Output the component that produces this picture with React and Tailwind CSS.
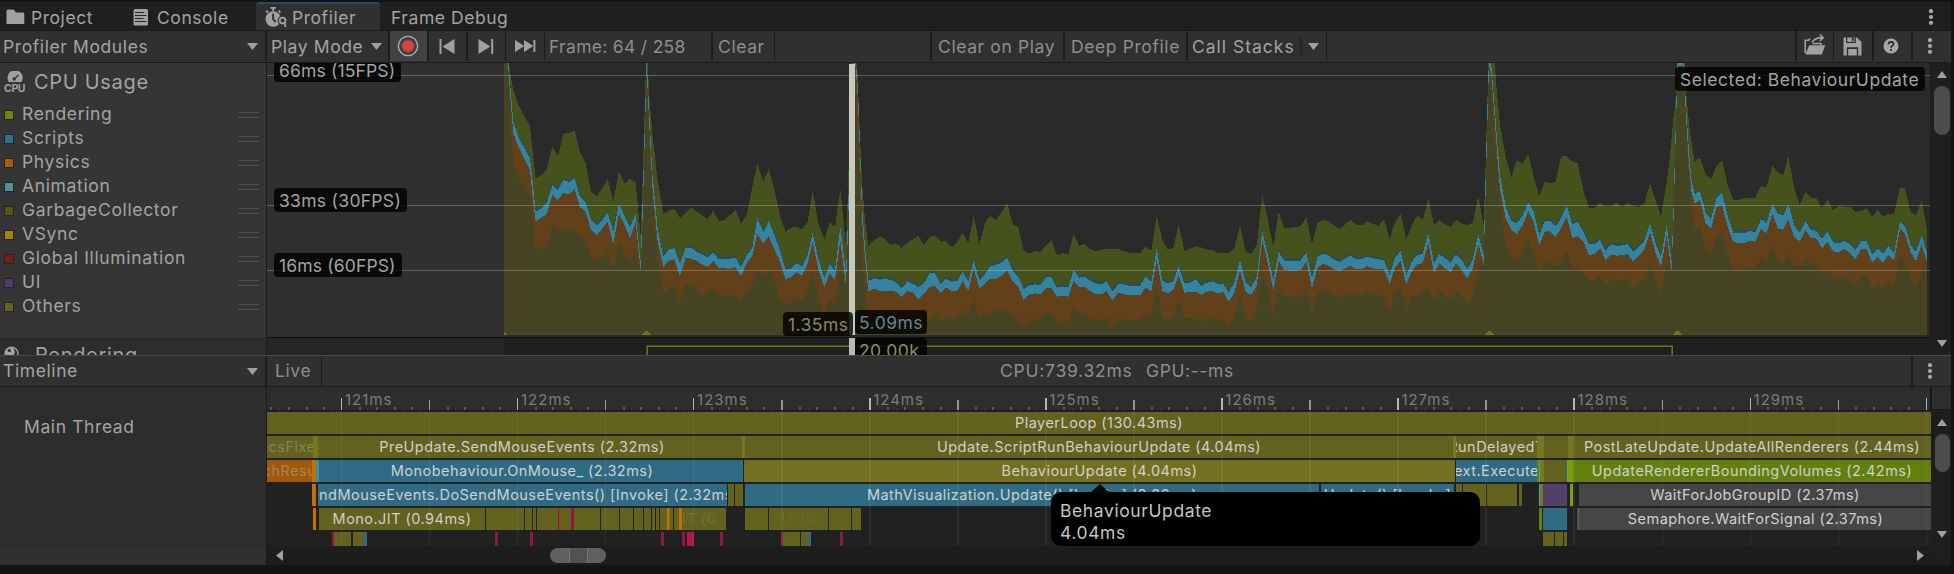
import React from "react";

/* ---------- shared bits ---------- */

const Sep = ({ w = 2 }) => (
  <div className={w === 1 ? "h-full w-px shrink-0 bg-[#1c1c1c]" : "h-full w-0.5 shrink-0 bg-[#1c1c1c]"} />
);

const Arrow = ({ dir = "down", w = 10, h = 7 }) => {
  const pts = {
    down: `0,0 ${w},0 ${w / 2},${h}`,
    up: `0,${h} ${w},${h} ${w / 2},0`,
    left: `${w},0 ${w},${h} 0,${h / 2}`,
    right: `0,0 0,${h} ${w},${h / 2}`,
  }[dir];
  return (
    <svg width={w} height={h} className="block shrink-0">
      <polygon points={pts} fill="#a0a0a0" />
    </svg>
  );
};

const Dots = () => (
  <svg width="6" height="18" className="block shrink-0" fill="#a8a8a8">
    <circle cx="3" cy="3.2" r="2.1" />
    <circle cx="3" cy="9" r="2.1" />
    <circle cx="3" cy="14.8" r="2.1" />
  </svg>
);

/* ---------- icons ---------- */

const FolderIcon = () => (
  <svg width="19" height="16" className="block">
    <path d="M0.5 2 Q0.5 0.5 2 0.5 H7.5 L10 3.5 H17 Q18.3 3.5 18.3 5 V15 H0.5 Z" fill="#a0a0a0" />
  </svg>
);

const ConsoleIcon = () => (
  <svg width="16" height="17" className="block">
    <path d="M2 0 H14 L15 1 V15.5 L14 16.5 H1.5 L0.5 15.5 V1 Z" fill="#a0a0a0" />
    <path d="M2 3.5 H11 M2 6.5 H13.5 M2 9.5 H10.5 M2 12.5 H13.5" stroke="#262626" strokeWidth="1.2" />
  </svg>
);

const ProfilerIcon = () => (
  <svg width="24" height="21" className="block">
    <path d="M5.5 0.8 H11 M8.2 1 V4 M1.2 5.5 L3 3.8 M13.5 3.8 L15.3 5.5" stroke="#a0a0a0" strokeWidth="2" fill="none" />
    <circle cx="8.2" cy="12" r="7.7" fill="#a0a0a0" />
    <path d="M7.2 6.8 H9 V11.5 L11.2 14.5 L10 15.7 L7.2 12.5 Z" fill="#2c2c2c" />
    <circle cx="17.6" cy="13.6" r="5" fill="#303030" />
    <circle cx="17.6" cy="13.6" r="2.9" stroke="#a0a0a0" strokeWidth="1.8" fill="none" />
    <path d="M19.6 15.8 L20.6 20" stroke="#a0a0a0" strokeWidth="1.9" />
  </svg>
);

const CpuIcon = () => (
  <svg width="22" height="22" className="block">
    <path d="M4.8 11 A7.6 7.6 0 1 1 17.4 11 Z" fill="#a0a0a0" />
    <circle cx="10.2" cy="8" r="1.7" fill="#363636" />
    <path d="M10.2 8 L14.6 4" stroke="#363636" strokeWidth="1.6" fill="none" />
    <text x="0" y="21.3" fontSize="10.5" fontWeight="700" fontFamily="Inter, sans-serif" fill="#a0a0a0" textLength="21.5">CPU</text>
  </svg>
);

const SphereIcon = () => (
  <svg width="15" height="15" className="block">
    <circle cx="7.5" cy="7.5" r="6.4" fill="none" stroke="#a0a0a0" strokeWidth="1.4" />
    <path d="M2 5 Q5 0.6 8 1 Q13 5 9.5 9 Q5 11 1.4 8 Z" fill="#a0a0a0" />
    <circle cx="5.3" cy="4.5" r="1.6" fill="#2c2c2c" />
  </svg>
);

const RecordIcon = () => (
  <svg width="22" height="22" className="block">
    <circle cx="11" cy="11" r="9.7" fill="none" stroke="#b0b0b0" strokeWidth="1.3" />
    <circle cx="11" cy="11" r="6" fill="#d3423b" />
  </svg>
);

const PrevIcon = () => (
  <svg width="16" height="15" className="block" fill="#a0a0a0">
    <rect x="0.5" y="0" width="2" height="15" />
    <polygon points="15.5,0 15.5,15 3.5,7.5" />
  </svg>
);

const NextIcon = () => (
  <svg width="16" height="15" className="block" fill="#a0a0a0">
    <rect x="13.2" y="0" width="2" height="15" />
    <polygon points="0.5,0 0.5,15 12.4,7.5" />
  </svg>
);

const LastIcon = () => (
  <svg width="21" height="12" className="block" fill="#a0a0a0">
    <polygon points="0,0 0,12 9.3,6" />
    <polygon points="9,0 9,12 18.3,6" />
    <rect x="18.4" y="0" width="2" height="12" />
  </svg>
);

const OpenIcon = () => (
  <svg width="22" height="21" className="block">
    <path d="M1.2 19 V6.3 H4.6 L6 4.6 M8.6 9.5 H17 V11" fill="none" stroke="#a0a0a0" strokeWidth="1.6" />
    <path d="M5.2 11.2 H21.2 L17.8 20.5 H1.4 Z" fill="#a0a0a0" />
    <path d="M8 8.5 Q10.5 3.6 19 3.6 M15.8 0.5 L19.2 3.7 L15.8 7" fill="none" stroke="#a0a0a0" strokeWidth="1.6" />
  </svg>
);

const SaveIcon = () => (
  <svg width="19" height="19" className="block">
    <path d="M0.5 0.5 H14 L18.5 5 V18.5 H15.2 V10.2 H3.8 V18.5 H0.5 Z" fill="#a0a0a0" />
    <path d="M3.6 0 V5.4 H12.3 V0" fill="none" stroke="#303030" strokeWidth="1.2" />
    <rect x="8.8" y="0.5" width="2" height="3.4" fill="#303030" />
    <rect x="5.2" y="12" width="8.6" height="6.5" fill="#a0a0a0" />
  </svg>
);

const HelpIcon = () => (
  <svg width="16" height="16" className="block">
    <circle cx="8" cy="8" r="7.5" fill="#a8a8a8" />
    <path d="M5.5 6.3 Q5.6 3.8 8.1 3.8 Q10.6 3.9 10.5 6 Q10.4 7.2 9 7.9 Q8 8.5 8 9.8" fill="none" stroke="#2b2b2b" strokeWidth="1.7" />
    <rect x="7.1" y="11" width="1.9" height="1.9" fill="#2b2b2b" />
  </svg>
);

/* ---------- CPU usage chart ---------- */

// Every sample: [x, total, scripts, physics, others], in thirds of a pixel.
const RUNS = [
  [1470, [
    [42,-400,-400,-400,-400],[52,-400,-400,-380,-380],[60,-325,-295,-260,-200],[70,-270,-175,-140,-50],[87,-222,-125,-95,-5],
    [104,-190,-95,-62,20],[120,-162,-65,-30,48],[128,-90,5,50,110],[137,-5,95,125,213],[154,-15,85,112,204],[170,-32,70,103,200],
    [187,-100,15,44,134],[204,-72,30,60,148],[220,-138,0,38,143],[237,-142,6,44,148],[254,-147,-5,28,150],[270,-85,50,82,170],
    [287,-50,65,95,173],[303,35,120,150,230],[320,47,137,167,244],[337,25,120,146,230],[353,-3,97,125,203],[370,65,155,192,268],
    [387,-25,72,100,178],[404,10,108,136,225],[420,-3,142,174,252],[437,6,100,125,210],[452,165,245,272,282],[458,0,60,110,115],
    [470,-420,-370,-330,-325],[478,-250,-200,-160,-110],[487,-140,-20,20,40],[503,0,145,185,240],[520,102,230,261,340],
    [537,92,208,240,325],[553,86,205,238,317],[570,115,250,288,370],[587,100,203,234,308],[603,83,203,236,312],[620,95,215,242,322],
    [637,107,224,255,347],[653,117,232,260,338],[670,93,217,242,322],[687,124,238,265,347],[704,120,237,265,344],[720,105,236,266,347],
    [737,90,234,262,345],[753,132,262,289,368],[770,105,227,250,333],[787,20,203,227,315],[802,-50,113,162,265],[820,3,157,190,288],
    [836,-33,123,168,266],[852,25,162,205,293],[870,105,210,245,352],[886,155,268,297,373],[903,143,265,292,370],[920,140,250,277,352],
    [936,148,260,287,360],[953,125,225,250,330],[968,32,158,185,265],[985,130,235,268,350],[1003,178,293,322,405],[1019,128,252,280,357],
    [1035,140,272,300,378],[1051,28,138,180,245],[1068,200,280,318,325],[1075,0,80,130,130],[1082,-400,-380,-360,-360],
    [1097,-420,-370,-340,-250],[1104,-290,-270,-235,-120],[1110,-130,-110,-75,20],[1117,20,90,130,240],[1125,120,200,235,320],
    [1135,198,302,334,412],[1152,180,296,325,395],[1170,170,299,333,400],[1185,177,297,333,405],[1202,195,300,332,405],
    [1218,190,307,335,410],[1235,204,325,352,430],[1252,188,304,333,405],[1270,177,312,338,415],[1285,167,322,358,430],
    [1302,196,310,340,415],[1318,172,280,322,425],[1335,165,280,317,398],[1352,185,313,340,425],[1368,183,297,322,410],
    [1385,203,305,333,417],[1402,185,303,332,410],[1418,158,275,303,393],[1435,190,305,332,408],[1451,107,240,265,350],
    [1468,195,300,325,415],
  ]],
  [2940, [
    [15,128,282,312,400],[30,108,258,296,408],[47,120,256,297,390],[64,98,248,288,385],[81,68,232,270,392],[98,132,272,305,407],
    [115,143,290,320,420],[131,212,328,360,443],[148,221,315,342,418],[165,213,313,340,416],[181,216,315,343,420],[198,196,292,325,400],
    [214,180,292,323,402],[231,227,323,350,427],[248,220,320,348,423],[265,223,322,350,426],[281,162,268,302,380],[297,197,293,322,400],
    [314,192,290,320,400],[331,208,303,334,416],[348,214,310,342,418],[365,209,312,342,420],[380,207,304,334,408],[398,207,335,362,440],
    [414,207,312,338,415],[431,213,313,343,418],[447,218,317,345,421],[465,219,317,345,420],[480,220,317,346,418],[497,200,290,322,403],
    [514,213,307,334,412],[530,107,205,238,315],[547,180,302,333,414],[563,208,310,340,414],[580,205,305,330,412],[596,132,258,287,360],
    [613,212,310,338,415],[630,207,308,336,413],[647,198,298,335,418],[664,203,317,344,424],[681,209,308,335,415],[697,211,304,332,411],
    [714,219,312,340,420],[730,219,312,336,415],[746,219,337,365,443],[763,205,308,338,412],[780,137,240,270,340],[797,213,307,335,416],
    [813,223,322,346,424],[830,195,290,318,393],[847,47,155,180,262],[864,120,225,252,335],[880,200,300,330,408],[896,95,215,243,318],
    [913,144,242,270,350],[930,144,242,272,347],[946,141,242,272,354],[962,139,242,270,350],[979,113,217,245,323],[996,193,295,324,400],
    [1013,128,230,262,337],[1030,120,222,252,331],[1046,124,227,257,336],[1063,137,240,267,345],[1079,147,245,274,352],
    [1095,133,235,265,344],[1112,120,228,257,337],[1129,135,238,268,346],[1145,136,237,268,344],[1162,123,230,258,334],
    [1178,131,235,265,342],[1195,138,238,268,343],[1212,117,240,268,352],[1229,178,285,312,393],[1245,127,232,262,338],
    [1262,102,213,243,320],[1279,178,285,312,390],[1295,137,245,275,350],[1312,105,225,252,345],[1328,121,222,250,335],
    [1345,57,158,190,322],[1362,135,250,278,362],[1378,120,222,250,330],[1395,132,235,265,347],[1412,141,248,276,360],
    [1428,120,222,250,335],
  ]],
  [4380, [
    [5,130,240,270,347],[22,136,268,296,373],[38,128,240,265,350],[55,50,162,192,265],[71,135,225,250,255],[76,-20,20,70,75],
    [82,-230,-210,-160,-155],[87,-420,-375,-345,-340],[94,-420,-345,-315,-300],[104,-350,-220,-185,-110],[112,-250,-110,-70,-40],
    [120,-165,-15,25,60],[137,-70,80,115,195],[154,-7,122,150,232],[170,-60,130,161,247],[187,-48,108,138,230],[205,-78,67,93,178],
    [221,-10,95,128,220],[238,50,165,195,278],[254,4,124,155,250],[270,10,123,154,243],[287,5,140,170,257],[303,-70,115,145,240],
    [320,-72,75,110,210],[337,-56,133,175,270],[353,-50,125,168,262],[370,30,155,185,280],[387,85,193,225,300],[404,82,192,222,300],
    [420,68,180,205,285],[437,80,212,240,315],[453,77,193,223,298],[470,68,198,227,302],[487,80,196,225,300],[503,68,192,222,298],
    [520,77,215,245,328],[537,82,200,228,308],[553,70,182,208,295],[570,10,130,157,242],[587,60,190,220,300],[603,110,232,260,343],
    [620,5,135,165,245],[628,-50,195,225,262],[635,-130,242,270,275],[641,-190,70,110,112],[646,-230,-130,-90,-85],
    [653,-420,-370,-340,-335],[670,-420,-370,-345,-340],[678,-270,-225,-190,-165],[687,-170,-85,-45,-5],[695,-110,5,40,80],
    [704,-55,42,70,150],[720,-68,33,60,138],[737,-18,98,130,210],[753,-2,118,147,228],[769,-42,55,82,165],[786,-60,38,75,155],
    [803,15,108,140,225],[820,60,158,187,270],[837,59,158,188,270],[852,55,160,190,270],[869,54,153,182,263],[886,54,157,185,268],
    [903,18,118,147,230],[920,22,128,160,248],[937,-43,72,100,190],[954,-22,100,148,243],[970,-15,107,147,250],[985,-72,72,120,223],
    [1003,25,137,172,260],[1019,75,158,184,265],[1036,35,123,150,235],[1053,53,150,173,252],[1069,54,152,175,257],
    [1086,85,177,205,287],[1103,57,155,185,265],[1119,90,187,214,292],[1136,78,190,218,297],[1153,80,183,206,285],
    [1169,80,192,218,300],[1186,95,210,237,317],[1203,93,184,208,290],[1220,85,182,208,288],[1236,110,222,248,327],
    [1253,90,206,230,310],[1269,110,222,248,323],[1285,101,197,225,300],[1302,103,220,243,325],[1320,24,125,147,225],
    [1335,25,138,160,245],[1352,98,195,217,300],[1368,105,215,243,322],[1385,62,167,195,270],[1401,150,217,245,258],
  ]],
];

const SAMPLES = RUNS.flatMap(([x0, run]) => run.map(([x, ...ys]) => [x0 + x, ...ys]));

const area = (k, lift = 0) =>
  `M1512,465 ` + SAMPLES.map((s) => `L${s[0]},${Math.min(s[k] - lift, 465)}`).join(" ") + ` L5781,465 Z`;

function UsageChart() {
  return (
    <svg width="1663" height="292" viewBox="801 -351 4989 876" className="block" shapeRendering="crispEdges">
      <rect x="801" y="-351" width="4989" height="876" fill="#303030" />
      <rect x="1512" y="-351" width="4278" height="822" fill="#2a2a2a" />
      <path d={area(1)} fill="#45521c" />
      <path d={area(2, 7)} fill="#2c4c50" />
      <path d={area(2)} fill="#3383a1" />
      <path d={area(3)} fill="#62411a" />
      <path d={area(4)} fill="#454423" />
      <path d="M1512,456 L1521,465 H1512 Z M1925,465 L1936,453 H1944 L1953,465 Z M4455,465 L4464,453 H4471 L4482,465 Z M5019,465 L5029,453 H5037 L5046,465 Z" fill="#75741f" />
      <path d="M801,-313.5 H5790 M801,76.5 H5790 M801,271.5 H5790" stroke="#ffffff" strokeOpacity="0.24" strokeWidth="3" />
      <rect x="801" y="471" width="4989" height="3" fill="#101010" />
      <rect x="801" y="474" width="711" height="51" fill="#252525" />
      <rect x="1512" y="474" width="4278" height="51" fill="#1f1f1f" />
      <path d="M1941,528 V498 H5016 V528" fill="none" stroke="#475410" strokeWidth="6" />
      <path d="M1941,528 V499.5 H5016 V528" fill="none" stroke="#647811" strokeWidth="3" />
      <rect x="2547" y="-348" width="18" height="813" fill="#c8c8bd" />
      <rect x="2547" y="474" width="18" height="51" fill="#b9b9b9" />
    </svg>
  );
}

const Tag = ({ className, children }) => (
  <div className={"absolute flex h-6 items-center rounded bg-black/80 pt-0.5 text-[17.5px] whitespace-nowrap " + className}>{children}</div>
);

/* ---------- timeline ---------- */

const C = {
  olive: "#63621e", oliveHi: "#78761e", sel: "#73711f", blue: "#2f6c84", blueHi: "#3a8eae",
  orange: "#9e590a", orangeHi: "#c96f02", crimson: "#8e1a42", crimsonHi: "#b0184c", brown: "#80511c",
  green: "#637f0c", lime: "#7b9f0a", teal: "#4fa39a", purple: "#50406a", gray: "#464646", grayHi: "#515151",
};

// Every block: [start, end, colour, label, label opacity, label shift], in window pixels.
const ROWS = [
  [[267, 1931, "olive", "PlayerLoop (130.43ms)"]],
  [
    [267, 313, "olive", "icsFixe", 0.3], [313, 318, "oliveHi"], [318, 742, "olive", "PreUpdate.SendMouseEvents (2.32ms)", 1, -8],
    [742, 745, "oliveHi"], [745, 1453, "olive", "Update.ScriptRunBehaviourUpdate (4.04ms)"], [1453, 1456, "oliveHi"],
    [1456, 1537, "olive", "RunDelayedT"], [1537, 1544, "oliveHi"], [1544, 1568, "olive"], [1568, 1573, "oliveHi"],
    [1573, 1931, "olive", "PostLateUpdate.UpdateAllRenderers (2.44ms)"],
  ],
  [
    [267, 312, "orange", "chResu", 0.35], [312, 316, "orangeHi"], [316, 319, "blueHi"],
    [319, 743, "blue", "Monobehaviour.OnMouse_ (2.32ms)", 1, -9], [744, 1455, "sel", "BehaviourUpdate (4.04ms)"],
    [1456, 1537, "blue", "ext.Execute"], [1537, 1539, "green"], [1539, 1540, "teal"], [1540, 1544, "oliveHi"],
    [1544, 1567, "olive"], [1567, 1568, "teal"], [1568, 1573, "lime"],
    [1573, 1931, "green", "UpdateRendererBoundingVolumes (2.42ms)"],
  ],
  [
    [312, 316, "orangeHi"], [318, 727, "blue", "SendMouseEvents.DoSendMouseEvents() [Invoke] (2.32ms)", 1, -3], [728, 734, "olive"],
    [735, 743, "olive"], [745, 1319, "blue", "MathVisualization.Update() [Invoke] (3.26ms)"],
    [1321, 1454, "blue", "Update() [Invoke]"], [1456, 1462, "olive"], [1463, 1486, "olive"], [1487, 1517, "olive"],
    [1519, 1522, "olive"], [1539, 1540, "teal"], [1540, 1543, "oliveHi"], [1543, 1567, "purple"], [1570, 1573, "lime"],
    [1579, 1931, "gray", "WaitForJobGroupID (2.37ms)"],
  ],
  [
    [313, 316, "orangeHi"], [319, 485, "olive", "Mono.JIT (0.94ms)"], [486, 524, "olive"], [525, 532, "olive"], [533, 536, "olive"],
    [537, 558, "olive"], [558, 559, "crimson"], [559, 561, "brown"], [561, 571, "olive"], [571, 574, "crimson"], [574, 600, "olive"],
    [601, 619, "olive"], [620, 633, "olive"], [634, 643, "olive"], [644, 651, "olive"], [652, 655, "olive"], [656, 659, "olive"],
    [660, 667, "olive"], [667, 669, "orangeHi"], [669, 670, "oliveHi"], [670, 673, "olive"], [674, 679, "olive"],
    [679, 682, "orangeHi"], [682, 726, "olive", "IT (0", 0.12, -5], [745, 768, "olive"], [769, 828, "olive", "IT (0", 0.06],
    [829, 851, "olive"], [852, 861, "olive"], [1539, 1542, "green"], [1543, 1567, "blue"], [1577, 1580, "grayHi"],
    [1580, 1931, "gray", "Semaphore.WaitForSignal (2.37ms)"],
  ],
  [
    [332, 334, "crimson"], [334, 335, "brown"], [335, 351, "olive"], [353, 364, "olive"], [364, 367, "blue"], [495, 498, "crimson"],
    [530, 533, "crimson"], [661, 664, "crimson"], [682, 685, "crimson"], [687, 694, "crimsonHi"], [720, 723, "crimson"],
    [781, 783, "crimson"], [783, 800, "olive"], [801, 808, "olive"], [808, 811, "blue"], [840, 843, "crimson"],
    [1543, 1554, "olive"], [1555, 1563, "olive"], [1564, 1567, "olive"],
  ],
];

const FlameRow = ({ blocks }) => (
  <div className="flex h-[22px] shrink-0">
    {blocks.map(([a, b, c, label, o = 1, shift = 0], i) => (
      <div
        key={i}
        className="flex h-full shrink-0 items-center justify-center overflow-hidden text-[14.5px] tracking-[0.46px] whitespace-nowrap text-[#cfcfcf]"
        style={{ marginLeft: a - (i ? blocks[i - 1][1] : 267), width: b - a, background: C[c] }}
      >
        {label && <span style={{ opacity: o, marginLeft: shift, marginRight: -shift }}>{label}</span>}
      </div>
    ))}
  </div>
);

const MS = 176.08;
const T0 = 341.4 - 267;

const markWidth = (half) => (half >= 5 && half <= 14 ? 2 : 1);

function Ruler() {
  const ticks = [];
  for (let i = -8; i < 182; i++) {
    const x = Math.round(T0 + (i * MS) / 20 - 0.5);
    if (x < 0 || x > 1662) continue;
    if (i % 20 === 0) ticks.push([x, 12, "#b5b5b5", markWidth(i / 10)]);
    else if (i % 10 === 0) ticks.push([x, 10, "#999999", markWidth(i / 10)]);
    else if (i % 2 === 0) ticks.push([x, 3, "#5a5a5a", 2]);
    else ticks.push([x, 1, "#555555", 1]);
  }
  return (
    <div className="relative h-[24px] w-[1663px] shrink-0 bg-[#2d2d2d]">
      <svg width="1663" height="24" className="block" shapeRendering="crispEdges">
        {ticks.map(([x, h, c, w], i) => (
          <rect key={i} x={x} y={23 - h} width={w} height={h} fill={c} />
        ))}
        <rect x="0" y="23" width="1663" height="1" fill="#1c1c1c" />
      </svg>
      {[121, 122, 123, 124, 125, 126, 127, 128, 129].map((t, i) => (
        <span
          key={t}
          className="absolute top-0 text-[15px] leading-[25px] tracking-[1px] text-[#7c7c7c]"
          style={{ left: T0 + i * MS + 3.5 }}
        >
          {t}ms
        </span>
      ))}
    </div>
  );
}

/* ---------- left panel ---------- */

const MODULES = [
  ["Rendering", "bg-[#6b870a]"],
  ["Scripts", "bg-[#2c7390]"],
  ["Physics", "bg-[#ac5d02]"],
  ["Animation", "bg-[#4b9399]"],
  ["GarbageCollector", "bg-[#585408]"],
  ["VSync", "bg-[#a58604]"],
  ["Global Illumination", "bg-[#781f06]"],
  ["UI", "bg-[#503a70]"],
  ["Others", "bg-[#64641a]"],
];

const ModuleList = () => (
  <div className="flex h-full w-[266px] shrink-0 flex-col overflow-hidden bg-[#353535]">
    <div className="flex h-[39px] shrink-0 items-center pb-px pl-1">
      <CpuIcon />
      <span className="pl-2 text-[20px] tracking-[0.7px]">CPU Usage</span>
    </div>
    {MODULES.map(([name, bg]) => (
      <div key={name} className="flex h-6 shrink-0 items-center pr-[7px] pl-1">
        <div className="mt-0.5 size-2.5 border border-black/30 p-0">
          <div className={"size-2 " + bg} />
        </div>
        <span className="flex-1 pl-2 text-[17.5px] tracking-[0.65px]">{name}</span>
        <div className="mt-0.5 h-1.5 w-[21px] border-y border-[#515151]" />
      </div>
    ))}
    <div className="mt-[19px] flex h-[18px] shrink-0 items-start bg-[#2c2c2c] pt-[9px] pl-1">
      <SphereIcon />
      <span className="pl-4 text-[20px] leading-[18px] tracking-[0.7px]">Rendering</span>
    </div>
  </div>
);

/* ---------- bars ---------- */

const Tab = ({ icon, label, className, gap = "" }) => (
  <div className={"flex h-full shrink-0 items-center " + className}>
    {icon}
    <span className={"pt-0.5 " + gap}>{label}</span>
  </div>
);

const TabBar = () => (
  <div className="flex h-[28px] shrink-0 bg-[#1f1f1f] text-[17.5px] tracking-[0.55px]">
    <Tab icon={<FolderIcon />} label="Project" gap="pl-1.5" className="w-[132px] pt-0.5 pl-1.5" />
    <Tab icon={<ConsoleIcon />} label="Console" gap="pl-2" className="w-[124px] pt-0.5 pl-[1px]" />
    <Tab icon={<ProfilerIcon />} label="Profiler" gap="pl-[3px]" className="w-[124px] rounded-t-sm border-t-2 border-[#23496b] bg-[#303030] pl-[9px]" />
    <Tab label="Frame Debug" className="flex-1 pt-0.5 pl-[11px]" />
    <div className="flex w-[23px] items-center pt-px pl-0"><Dots /></div>
  </div>
);

const Cell = ({ className, children }) => (
  <div className={"flex h-full shrink-0 items-center " + className}>{children}</div>
);

const Word = ({ className = "", children }) => <span className={"pt-px " + className}>{children}</span>;

const MainToolbar = () => (
  <div className="flex h-[30px] shrink-0 bg-[#303030] text-[17.5px] tracking-[0.6px]">
    <Cell className="w-[265px] justify-between pr-[7px] pl-[3px]"><Word>Profiler Modules</Word><Arrow w={11} /></Cell>
    <Sep />
    <Cell className="w-[121px] pl-1"><Word className="w-[100px]">Play Mode</Word><Arrow w={11} /></Cell>
    <Sep />
    <Cell className="w-[37px] justify-center bg-[#424242] pr-[2px]"><RecordIcon /></Cell>
    <Sep />
    <Cell className="w-[37px] justify-center pr-[2px]"><PrevIcon /></Cell>
    <Sep />
    <Cell className="w-[37px] justify-center pr-[2px]"><NextIcon /></Cell>
    <Sep w={1} />
    <Cell className="w-[38px] pl-[9px]"><LastIcon /></Cell>
    <Sep w={1} />
    <Cell className="w-[166px] pl-1 tracking-[0.3px] text-[#8e8e8e]"><Word>Frame: 64 / 258</Word></Cell>
    <Sep />
    <Cell className="w-[61px] pl-[5px] text-[#8e8e8e]"><Word>Clear</Word></Cell>
    <Sep w={1} />
    <Cell className="w-[155px]" />
    <Sep />
    <Cell className="w-[131px] pl-1.5 text-[#8e8e8e]"><Word>Clear on Play</Word></Cell>
    <Sep />
    <Cell className="w-[121px] pl-1.5 text-[#8e8e8e]"><Word>Deep Profile</Word></Cell>
    <Sep />
    <Cell className="w-[138px] pl-1">
      <Word className="w-[108px] tracking-[1px]">Call Stacks</Word>
      <div className="h-[18px] w-0.5 bg-[#252525]" />
      <div className="pl-1.5"><Arrow w={11} /></div>
    </Cell>
    <Sep w={1} />
    <Cell className="flex-1" />
    <Sep />
    <Cell className="w-[36px] justify-center pb-1"><OpenIcon /></Cell>
    <Sep w={1} />
    <Cell className="w-[38px] justify-center pr-[2px]"><SaveIcon /></Cell>
    <Sep />
    <Cell className="w-[37px] justify-center pr-[3px]"><HelpIcon /></Cell>
    <Sep />
    <Cell className="w-[38px] pl-[14px]"><Dots /></Cell>
  </div>
);

/* ---------- page ---------- */

export default function App() {
  return (
    <div className="flex h-[574px] w-[1954px] flex-col overflow-hidden bg-[#141414] pt-0.5 pr-[3px] font-['Inter',sans-serif] leading-none text-[#a3a3a3]">
      <TabBar />
      <div className="h-px shrink-0 bg-[#1b1b1b]" />
      <MainToolbar />
      <div className="h-0.5 shrink-0 border-b border-[#1b1b1b] bg-[#303030]" />

      <div className="flex h-[292px] shrink-0">
        <ModuleList />
        <div className="h-full w-px bg-[#1c1c1c]" />
        <div className="relative h-full w-[1663px] shrink-0 overflow-hidden tracking-[0.45px]">
          <UsageChart />
          <Tag className="top-[-5px] left-[7px] w-[127px] pl-[5px] tracking-[0.15px]">66ms (15FPS)</Tag>
          <Tag className="top-[125px] left-[7px] w-[133px] pl-[5px] tracking-[0.3px]">33ms (30FPS)</Tag>
          <Tag className="top-[190px] left-[7px] w-[128px] pl-[5px] tracking-[0.15px]">16ms (60FPS)</Tag>
          <Tag className="top-[4px] left-[1408px] w-[250px] pl-[5px] tracking-[0.55px]">Selected: BehaviourUpdate</Tag>
          <Tag className="top-[249px] left-[516px] w-[70px] pl-[5px] text-[#86865f]">1.35ms</Tag>
          <Tag className="top-[247px] left-[588px] w-[72px] pl-1 text-[#668594]">5.09ms</Tag>
          <Tag className="top-[275px] left-[588px] w-[72px] pl-1 text-[#8b925f]">20.00k</Tag>
        </div>
        <div className="flex h-full flex-1 flex-col items-center bg-[#1f1f1f] pt-2 pl-0.5">
          <Arrow dir="up" />
          <div className="mt-2 h-[49px] w-4 rounded-full bg-[#4c4c4c]" />
          <div className="flex-1" />
          <div className="pb-2"><Arrow /></div>
        </div>
      </div>

      <div className="h-px shrink-0 bg-[#484848]" />
      <div className="flex h-[30px] shrink-0 bg-[#303030] text-[17.5px] tracking-[0.6px]">
        <Cell className="w-[265px] justify-between pr-[7px] pl-[3px]"><span>Timeline</span><Arrow w={11} /></Cell>
        <Sep w={2} />
        <Cell className="w-[54px] pl-2 text-[#8e8e8e]">Live</Cell>
        <Sep w={1} />
        <Cell className="flex-1 pl-[678px] text-[#8e8e8e]">
          <span className="w-[146px] tracking-[0.75px]">CPU:739.32ms</span>
          <span>GPU:--ms</span>
        </Cell>
        <Sep />
        <Cell className="w-[38px] pl-[14px]"><Dots /></Cell>
      </div>
      <div className="h-px shrink-0 bg-[#1b1b1b]" />

      <div className="flex h-[178px] shrink-0">
        <div className="flex h-full w-[266px] shrink-0 flex-col bg-[#2d2d2d]">
          <div className="flex-1 pt-[31px] pl-6 text-[17.5px] tracking-[0.6px]">Main Thread</div>
          <div className="h-[19px] bg-[#303030]" />
        </div>
        <div className="h-full w-px bg-[#1c1c1c]" />
        <div className="flex h-full w-[1664px] shrink-0 flex-col">
          <Ruler />
          <div className="relative h-[135px] shrink-0 bg-[#212121]">
            <div className="flex h-[135px] flex-col gap-0.5 overflow-hidden pt-px">
              {ROWS.map((blocks, i) => (
                <FlameRow key={i} blocks={blocks} />
              ))}
            </div>
            <svg width="1663" height="135" className="pointer-events-none absolute inset-0" shapeRendering="crispEdges">
              {Array.from({ length: 19 }, (_, i) => (
                <rect key={i} x={Math.round(T0 + (i * MS) / 2 - 0.5)} y="0" width={markWidth(i)} height="134" fill="#fff" fillOpacity="0.055" />
              ))}
            </svg>
            <div className="absolute top-[81px] left-[784px] h-[54px] w-[429px] rounded-[10px] bg-black pt-2 pl-[9px] text-[17.5px] leading-[22px] tracking-[0.6px] text-[#c4c4c4]">
              <svg width="20" height="9" className="absolute -top-2 left-[39px]">
                <polygon points="0,9 10,0 20,9" fill="#060808" />
              </svg>
              BehaviourUpdate
              <br />
              4.04ms
            </div>
          </div>
          <div className="flex h-[19px] shrink-0 items-center bg-[#1d1d1d] pr-[7px] pl-[9px]">
            <Arrow dir="left" w={7} h={11} />
            <div className="ml-[267px] flex h-[15px] w-[56px] justify-center rounded-full bg-[#606060]">
              <div className="h-full w-[19px] border-x border-[#767676] bg-[#525252]" />
            </div>
            <div className="flex-1" />
            <Arrow dir="right" w={7} h={11} />
          </div>
        </div>
        <div className="flex h-full flex-1 flex-col">
          <div className="h-[23px] border-b border-l border-[#1c1c1c] bg-[#2d2d2d]" />
          <div className="flex flex-1 flex-col items-center bg-[#1e1e1e] pt-[9px] pl-0.5">
            <Arrow dir="up" />
            <div className="mt-2 h-[38px] w-[15px] rounded-full bg-[#4c4c4c]" />
            <div className="flex-1" />
            <div className="pb-[27px]"><Arrow /></div>
          </div>
        </div>
      </div>
    </div>
  );
}
